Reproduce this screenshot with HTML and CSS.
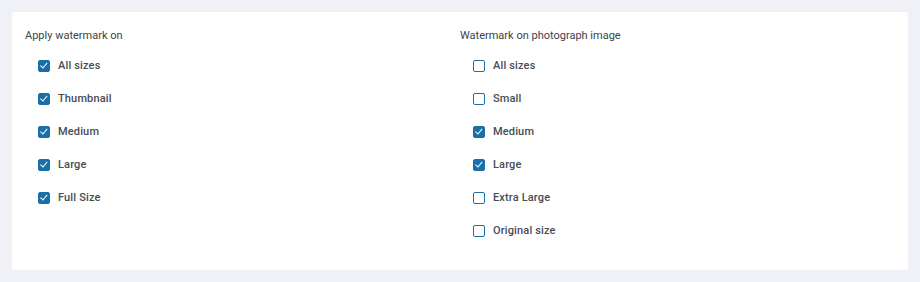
FILE: index.html
```html
<!DOCTYPE html>
<html lang="en">

<head>
    <meta charset="UTF-8">
    <meta name="viewport" content="width=device-width, initial-scale=1.0">
    <title>Watermark settings</title>
    <link rel="stylesheet" href="styles.css">
</head>

<body>
    <div class="card">
        <div class="group">
            <h3>Apply watermark on</h3>
            <label class="option"><input type="checkbox" checked> All sizes</label>
            <label class="option"><input type="checkbox" checked> Thumbnail</label>
            <label class="option"><input type="checkbox" checked> Medium</label>
            <label class="option"><input type="checkbox" checked> Large</label>
            <label class="option"><input type="checkbox" checked> Full Size</label>
        </div>
        <div class="group">
            <h3>Watermark on photograph image</h3>
            <label class="option"><input type="checkbox"> All sizes</label>
            <label class="option"><input type="checkbox"> Small</label>
            <label class="option"><input type="checkbox" checked> Medium</label>
            <label class="option"><input type="checkbox" checked> Large</label>
            <label class="option"><input type="checkbox"> Extra Large</label>
            <label class="option"><input type="checkbox"> Original size</label>
        </div>
    </div>
</body>

</html>
```

FILE: styles.css
```css
:root {
    font-family: 'Roboto', sans-serif;
}
body {
    margin: 0;
    padding: 12px;
    background-color: #eff1f6;
    color: #3c434a;
}
.card {
    display: grid;
    grid-template-columns: 1fr 1fr;
    padding: 16px 13px 23px;
    background-color: #fff;
    border-radius: 3px;
}
.group h3 {
    margin: 0 0 5px;
    font-size: 11px;
    font-weight: 400;
    line-height: 16px;
}
.option {
    display: flex;
    align-items: center;
    gap: 8px;
    height: 33px;
    padding-left: 13px;
    font-size: 11px;
    font-weight: 500;
    letter-spacing: 0.15px;
    color: #474d55;
}
.option input {
    appearance: none;
    -webkit-appearance: none;
    margin: 0;
    width: 12px;
    height: 12px;
    border: 1.5px solid #1a6fa8;
    border-radius: 2px;
    background-color: #fff;
    position: relative;
}
.option input:checked {
    background-color: #1a6fa8;
}
.option input:checked::after {
    content: '';
    position: absolute;
    left: 3px;
    top: 0.5px;
    width: 2.5px;
    height: 5.5px;
    border: solid #fff;
    border-width: 0 1.5px 1.5px 0;
    transform: rotate(40deg);
}
```
